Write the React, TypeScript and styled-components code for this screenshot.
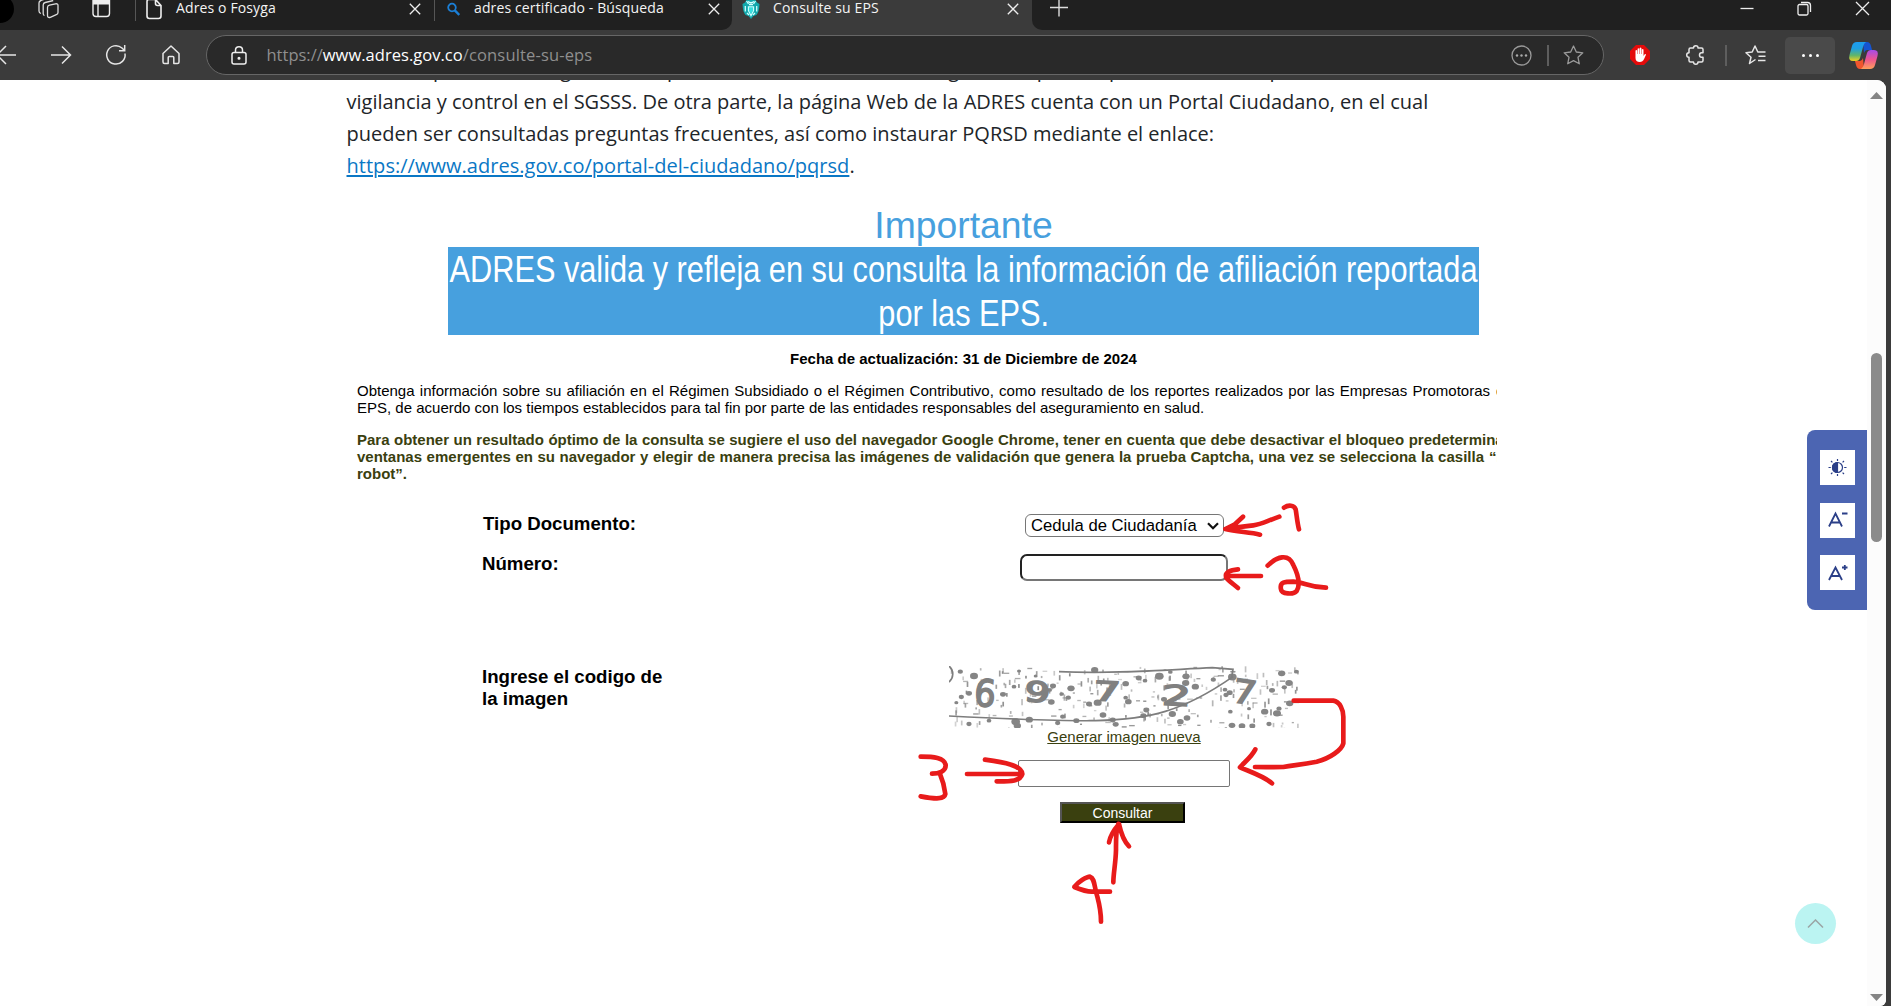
import React from "react";
import styled, { createGlobalStyle } from "styled-components";

const ARIAL = '"Liberation Sans", Arial, sans-serif';
const UI = '"Open Sans", "Noto Sans", sans-serif';
const OLIVE = "#3a400f";

const GlobalStyle = createGlobalStyle`
  * { box-sizing: border-box; }
  html, body { margin: 0; padding: 0; overflow: hidden; background: #3b3b3b; }
`;

const Window = styled.div`
  position: relative;
  width: 1891px;
  height: 1006px;
  display: flex;
  flex-direction: column;
  overflow: hidden;
  background: #3b3b3b;
  font-family: ${UI};
`;

/* ---------- tab strip ---------- */
const TabStrip = styled.header`
  display: flex;
  height: 30px;
  flex: none;
  background: #202020;
  overflow: hidden;
`;
const Leading = styled.div`
  display: flex;
  width: 135px;
  flex: none;
`;
const Avatar = styled.div`
  width: 28px;
  height: 28px;
  margin: -5px 24px 0 -14px;
  border-radius: 50%;
  background: #000;
`;
const LeadIcon = styled.svg<{ $gap?: number }>`
  display: block;
  flex: none;
  margin-right: ${(p) => p.$gap ?? 0}px;
`;
const Tab = styled.div<{ $width: number; $pad: number }>`
  display: flex;
  align-items: flex-start;
  flex: none;
  width: ${(p) => p.$width}px;
  height: 30px;
  padding-left: ${(p) => p.$pad}px;
  background: #202020;
`;
const Separator = styled.i`
  width: 1px;
  height: 21px;
  flex: none;
  background: #565656;
`;
const ActiveTab = styled(Tab)`
  background: #3b3b3b;
`;
const Corner = styled.span<{ $side: "left" | "right" }>`
  flex: none;
  width: 10px;
  height: 30px;
  background: #3b3b3b;
  margin: ${(p) => (p.$side === "left" ? "0 0 0 -10px" : "0")};
  &::before {
    content: "";
    display: block;
    height: 30px;
    background: #202020;
    border-radius: ${(p) => (p.$side === "left" ? "0 0 10px 0" : "0 0 0 10px")};
  }
`;
const TabTitle = styled.span`
  flex: 1;
  height: 16px;
  color: #f4f4f4;
  font-size: 14px;
  line-height: 16px;
  letter-spacing: 0.13px;
  white-space: nowrap;
`;
const TabIcon = styled.svg<{ $gap: number }>`
  display: block;
  flex: none;
  margin-right: ${(p) => p.$gap}px;
`;
const CloseIcon = styled.svg<{ $right: number }>`
  display: block;
  flex: none;
  margin: 3px ${(p) => p.$right}px 0 0;
`;
const WindowControls = styled.div`
  display: flex;
  margin-left: auto;
  padding-right: 21px;
  gap: 43px;
`;

/* ---------- toolbar ---------- */
const Toolbar = styled.nav`
  display: flex;
  align-items: center;
  height: 50px;
  flex: none;
  background: #3b3b3b;
`;
const NavButtons = styled.div`
  display: flex;
  align-items: center;
  width: 206px;
  flex: none;
  margin-top: -1px;
`;
const Glyph = styled.svg<{ $ml?: number }>`
  display: block;
  flex: none;
  margin-left: ${(p) => p.$ml ?? 0}px;
  overflow: visible;
`;
const AddressBar = styled.div`
  display: flex;
  align-items: center;
  width: 1398px;
  height: 40px;
  flex: none;
  border: 1.5px solid #666;
  border-radius: 20px;
  background: #292929;
`;
const Url = styled.div`
  flex: 1;
  display: flex;
  margin-left: 20px;
  color: #8f8f8f;
  font-size: 16.5px;
  line-height: 24px;
  white-space: nowrap;
`;
const UrlPart = styled.span<{ $ls: number; $strong?: boolean }>`
  letter-spacing: ${(p) => p.$ls}px;
  color: ${(p) => (p.$strong ? "#fff" : "inherit")};
`;
const Divider = styled.i<{ $ml: number }>`
  width: 2px;
  height: 21px;
  flex: none;
  margin-left: ${(p) => p.$ml}px;
  background: #5e5e5e;
`;
const MenuButton = styled.div`
  display: flex;
  align-items: center;
  justify-content: center;
  gap: 4px;
  width: 50px;
  height: 37px;
  margin: 0 14px 0 19px;
  border-radius: 5px;
  background: #4a4a4a;
`;
const MenuDot = styled.i`
  width: 3px;
  height: 3px;
  border-radius: 50%;
  background: #fff;
`;

/* ---------- page ---------- */
const Viewport = styled.div`
  display: flex;
  width: 1886px;
  height: 926px;
  overflow: hidden;
  border-radius: 0 9px 6px 0;
  background: #fff;
`;
const Page = styled.main`
  display: flex;
  flex-direction: column;
  width: 1867px;
  height: 926px;
  overflow: hidden;
`;
const Intro = styled.p`
  margin: -26px 0 0 346.5px;
  color: #212529;
  font-size: 20px;
  line-height: 32px;
  white-space: nowrap;
`;
const IntroLine = styled.span`
  display: block;
`;
const IntroLink = styled.a`
  color: #0a77c5;
  letter-spacing: 0.03px;
  text-decoration: underline;
  text-decoration-thickness: 2px;
  text-underline-offset: 2px;
`;
const Query = styled.section`
  width: 1151px;
  margin: 21px 0 0 346px;
  padding-left: 11px;
  overflow: hidden;
  font-family: ${ARIAL};
`;
const Heading = styled.h2`
  width: 1031px;
  margin: 0 0 0 91px;
  color: #47a0de;
  font-size: 37.33px;
  font-weight: 400;
  line-height: 44px;
  text-align: center;
`;
const Highlight = styled.div`
  display: flex;
  flex-direction: column;
  align-items: center;
  width: 1031px;
  margin-left: 91px;
  background: #47a0de;
  color: #fff;
  font-size: 37.33px;
  line-height: 44px;
  white-space: nowrap;
`;
/* Condensed face: the regular one at 82% of its width. */
const HighlightLine = styled.span`
  display: block;
  transform: scaleX(0.823);
`;
const Updated = styled.p`
  width: 1031px;
  margin: 15px 0 15px 91px;
  color: #000;
  font-size: 15px;
  font-weight: 700;
  line-height: 17px;
  text-align: center;
`;
const Notice = styled.div<{ $bold?: boolean }>`
  margin-bottom: 15px;
  color: ${(p) => (p.$bold ? OLIVE : "#000")};
  font-size: 15px;
  font-weight: ${(p) => (p.$bold ? 700 : 400)};
  line-height: 17px;
`;
const NoticeLine = styled.div`
  display: flex;
  width: 1300px;
  white-space: nowrap;
`;
const Justified = styled.span<{ $width: number }>`
  flex: none;
  width: ${(p) => p.$width}px;
  text-align: justify;
  text-align-last: justify;
  white-space: normal;
`;
const Tail = styled.span<{ $gap: number }>`
  margin-left: ${(p) => p.$gap}px;
`;

/* ---------- form ---------- */
const Form = styled.form`
  display: grid;
  grid-template-columns: 466px 350px;
  grid-template-rows: 40px 113px auto;
  margin: 16px 0 0 483px;
  font-family: ${ARIAL};
`;
const Label = styled.label<{ $shift?: number }>`
  width: 190px;
  margin-left: ${(p) => p.$shift ?? 0}px;
  color: #000;
  font-size: 18.67px;
  font-weight: 700;
  line-height: 22px;
`;
const Field = styled.div`
  display: flex;
  flex-direction: column;
  align-items: center;
`;
const SelectBox = styled.div`
  display: flex;
  align-items: center;
  justify-content: space-between;
  width: 199px;
  height: 23px;
  margin: 1px 0 0 1px;
  padding: 0 4px 0 5px;
  border: 1px solid #767676;
  border-radius: 6px;
  color: #000;
  font-size: 16.67px;
  line-height: 20px;
  white-space: nowrap;
`;
const NumberInput = styled.input`
  width: 208px;
  height: 27px;
  margin-top: 1px;
  border: 2px solid;
  border-color: #222 #767676 #767676 #222;
  border-radius: 7px;
  background: #fff;
  outline: none;
`;
const Captcha = styled.svg`
  display: block;
  width: 350px;
  height: 62px;
`;
const Regenerate = styled.a`
  color: ${OLIVE};
  font-size: 15px;
  line-height: 18px;
  text-decoration: underline;
`;
const CodeInput = styled.input`
  width: 212px;
  height: 27px;
  margin-top: 14px;
  border: 1px solid #767676;
  border-radius: 2px;
  background: #fff;
  outline: none;
`;
const Submit = styled.button`
  width: 125px;
  height: 21px;
  margin: 15px 3px 0 0;
  padding: 0;
  border: 2px solid;
  border-color: #555 #000 #000 #555;
  background: ${OLIVE};
  color: #fff;
  font-family: ${ARIAL};
  font-size: 14px;
  line-height: 16px;
`;

/* ---------- scrollbar and floating controls ---------- */
const Scrollbar = styled.div`
  display: flex;
  flex-direction: column;
  align-items: center;
  width: 19px;
  height: 926px;
  padding: 12px 0 5px;
  background: #fcfcfc;
`;
const Thumb = styled.div`
  width: 11px;
  height: 189px;
  margin-top: 254px;
  border-radius: 6px;
  background: #8b8b8b;
`;
const Arrow = styled.svg<{ $end?: boolean }>`
  display: block;
  margin-top: ${(p) => (p.$end ? "auto" : 0)};
`;
const Accessibility = styled.aside`
  position: absolute;
  left: 1807px;
  top: 430px;
  display: flex;
  flex-direction: column;
  gap: 17.5px;
  width: 60px;
  height: 180px;
  padding: 20px 12px 0 13px;
  border-radius: 8px 0 0 8px;
  background: #4c65b2;
`;
const AccessButton = styled.div`
  display: flex;
  align-items: center;
  justify-content: center;
  width: 35px;
  height: 35px;
  flex: none;
  background: #fff;
  color: #2b3f88;
`;
const BackToTop = styled.div`
  position: absolute;
  left: 1795px;
  top: 903px;
  display: flex;
  align-items: center;
  justify-content: center;
  width: 41px;
  height: 41px;
  border-radius: 50%;
  background: #bbf4f2;
`;
const Ink = styled.svg`
  position: absolute;
  left: 900px;
  top: 490px;
  width: 460px;
  height: 450px;
  pointer-events: none;
`;

const Close = ({ right }: { right: number }) => (
  <CloseIcon $right={right} width="12" height="12" viewBox="0 0 12 12">
    <path d="M.8 .8l10.4 10.4M11.2 .8L.8 11.2" stroke="#eee" strokeWidth="1.3" />
  </CloseIcon>
);

/* Larger speckles of the captcha: x, y, radius in thirds of a pixel. */
const BLOTS: [number, number, number][] = [
  [34, 17, 8], [75, 30, 12], [37, 93, 8], [60, 82, 9], [162, 85, 9], [210, 15, 6], [195, 62, 7], [242, 103, 8],
  [312, 60, 9], [338, 84, 7], [366, 67, 11], [437, 12, 11], [358, 95, 8], [307, 108, 10], [420, 114, 9], [446, 110, 12],
  [530, 53, 10], [530, 95, 7], [538, 107, 10], [569, 36, 9], [588, 44, 7], [631, 31, 13], [664, 18, 7], [711, 31, 11],
  [710, 51, 11], [698, 67, 7], [739, 62, 11], [793, 41, 8], [831, 87, 8], [828, 71, 7], [850, 33, 13], [842, 80, 9],
  [645, 100, 9], [998, 22, 11], [1020, 51, 11], [1022, 112, 11], [1042, 17, 7], [1006, 64, 8], [969, 73, 9],
  [990, 128, 8], [947, 137, 11], [984, 142, 12], [670, 144, 11], [714, 156, 10], [694, 167, 10], [592, 132, 9],
  [583, 149, 9], [462, 147, 10], [491, 162, 9], [241, 161, 11], [200, 167, 13], [205, 179, 11], [326, 171, 8],
  [382, 164, 9], [341, 152, 8], [500, 175, 9], [849, 178, 10], [879, 180, 10], [910, 180, 9], [960, 174, 8],
  [844, 137, 7], [120, 164, 7], [60, 174, 8], [302, 72, 7], [95, 55, 7], [260, 30, 6], [900, 128, 6], [22, 110, 6],
];

const specks = (() => {
  let seed = 69727;
  const next = () => {
    seed = (seed * 16807) % 2147483647;
    return seed / 2147483647;
  };
  return Array.from({ length: 240 }, () => ({
    x: next() * 1050,
    y: next() * 186,
    tall: next() > 0.4,
    len: 6 + next() * 13,
    o: 0.35 + next() * 0.6,
  }));
})();

/* Each digit is stretched and tilted about its own centre. */
const DIGITS = [
  { c: "6", x: 108, y: 80, size: 112, sx: 0.9, r: 4 },
  { c: "9", x: 265, y: 77, size: 84, sx: 1.45, r: 6 },
  { c: "7", x: 474, y: 75, size: 80, sx: 1.6, r: 3 },
  { c: "2", x: 683, y: 88, size: 82, sx: 1.65, r: 3 },
  { c: "7", x: 887, y: 77, size: 98, sx: 1.15, r: 9 },
];

const CaptchaImage = () => (
  <Captcha viewBox="0 0 1050 186" preserveAspectRatio="none">
    <rect width="1050" height="186" fill="#fff" />
    {specks.map((s, i) => (
      <rect
        key={i}
        x={s.x}
        y={s.y}
        width={s.tall ? 5 : s.len}
        height={s.tall ? s.len : 4}
        fill="#858585"
        opacity={s.o}
      />
    ))}
    {BLOTS.map(([x, y, r], i) => (
      <ellipse key={i} cx={x} cy={y} rx={r} ry={r * 0.8} fill="#858585" />
    ))}
    {DIGITS.map((d, i) => (
      <text
        key={i}
        y={d.size * 0.365}
        textAnchor="middle"
        fontFamily='"DejaVu Sans", sans-serif'
        fontSize={d.size}
        fill="#808080"
        stroke="#808080"
        strokeWidth="5"
        transform={`translate(${d.x} ${d.y}) rotate(${d.r}) scale(${d.sx} 1)`}
      >
        {d.c}
      </text>
    ))}
    <g fill="none" stroke="#7d7d7d" strokeWidth="5">
      <path d="M0 150C160 158 330 166 440 164C600 160 700 138 852 32" />
      <path d="M330 17C500 24 640 12 790 5L852 10L848 34" />
      <path d="M0 0C16 14 14 36 0 48" />
    </g>
  </Captcha>
);

const Chrome = () => (
  <>
    <TabStrip>
      <Leading>
        <Avatar />
        <LeadIcon $gap={33} width="21" height="19" viewBox="0 0 21 19" fill="none" stroke="#ddd" strokeWidth="1.3">
          <path d="M9.500 7.500q0-2 2-2.400l6-1.300q2.500-.4 2.500 1.700v7q0 1.600-1.700 2.100l-6 2.700q-2.800.8-2.800-1.800z" />
          <path d="M6.500 15.500q-1.300-.4-1.300-2V5q0-2 2-2.500l8-2M3 13.500q-2-.6-2-2.500V3q0-2 2-2.500L7-1" />
        </LeadIcon>
        <LeadIcon width="19" height="18" viewBox="0 0 19 18" fill="none">
          <rect x="1" y="-3" width="16.500" height="19.500" rx="3" stroke="#eee" strokeWidth="1.400" />
          <path d="M1 0h16.500v4.500H1z" fill="#eee" />
          <path d="M6 4v12" stroke="#eee" strokeWidth="1.400" />
        </LeadIcon>
      </Leading>
      <Separator />
      <Tab $width={298} $pad={10}>
        <TabIcon $gap={14} width="16" height="20" viewBox="0 0 16 20" fill="none" stroke="#eee" strokeWidth="1.600">
          <path d="M9.500-.5H3q-2 0-2 2V16q0 2.500 2.500 2.500h9Q15 18.500 15 16V5.500zM9.500-1v4.500q0 2 2 2H15" />
        </TabIcon>
        <TabTitle>Adres o Fosyga</TabTitle>
        <Close right={13} />
      </Tab>
      <Separator />
      <Tab $width={297} $pad={12}>
        <TabIcon $gap={14} width="13" height="16" viewBox="0 0 13 16" fill="none" stroke="#1b7fd6">
          <circle cx="5" cy="7.500" r="3.800" strokeWidth="1.800" />
          <path d="M7.800 10.300l4.500 4.700" strokeWidth="2.400" />
        </TabIcon>
        <TabTitle>adres certificado - Búsqueda</TabTitle>
        <Close right={12} />
      </Tab>
      <Corner $side="left" />
      <ActiveTab $width={300} $pad={10}>
        <TabIcon $gap={13} width="18" height="19" viewBox="0 0 18 19">
          <path d="M3 2.500L5-1h8l2 3.500 2.500 1.500q-.3 8-3 11L11.500 16 9 19l-2.500-3L3.500 15Q.8 12 .5 4z" fill="#12a8ac" />
          <path d="M4.500 1l2 3M13.500 1l-2 3M3.300 6v5.500M14.700 6v5.500M6.500 7h5v3.500l-2.500 5-2.500-5zM5 13l2 2M13 13l-2 2" stroke="#c8ffff" strokeWidth="1.300" fill="none" />
          <path d="M7 7.500h4v3L9 14l-2-3.500z" fill="#38e0e0" />
          <path d="M6 1.500q3 2.500 6 0M7 4.500h4" stroke="#d9ffff" strokeWidth="1.500" fill="none" />
        </TabIcon>
        <TabTitle>Consulte su EPS</TabTitle>
        <Close right={13} />
      </ActiveTab>
      <Corner $side="right" />
      <LeadIcon width="30" height="18" viewBox="0 0 30 18">
        <path d="M8 7.500h18M17-1v17.500" stroke="#ddd" strokeWidth="1.400" />
      </LeadIcon>
      <WindowControls>
        <LeadIcon width="14" height="18"><path d="M.500 8.500h13" stroke="#eee" strokeWidth="1.300" /></LeadIcon>
        <LeadIcon width="15" height="18" fill="none" stroke="#eee" strokeWidth="1.300">
          <rect x="1" y="4.500" width="10" height="10.500" rx="1.500" />
          <path d="M4 2.500h6.500q3 0 3 3V12" />
        </LeadIcon>
        <LeadIcon width="15" height="18"><path d="M1 2l13 13M14 2L1 15" stroke="#eee" strokeWidth="1.300" /></LeadIcon>
      </WindowControls>
    </TabStrip>

    <Toolbar>
      <NavButtons>
        <Glyph width="16" height="20" viewBox="0 0 16 20" fill="none" stroke="#e6e6e6" strokeWidth="1.500">
          <path d="M16 10H-3M6 1L-3 10l9 9" />
        </Glyph>
        <Glyph $ml={35} width="20" height="20" viewBox="0 0 20 20" fill="none" stroke="#e6e6e6" strokeWidth="1.500">
          <path d="M0 10h19M11 1.500l8.500 8.500-8.500 8.500" />
        </Glyph>
        <Glyph $ml={35} width="20" height="20" viewBox="0 0 20 20" fill="none" stroke="#e6e6e6" strokeWidth="1.500">
          <path d="M19 8.500A9.200 9.200 0 1 1 16 3l2.500 2.500M18.700 0v5.700H13" />
        </Glyph>
        <Glyph $ml={36} width="18" height="20" viewBox="0 0 18 20" fill="none" stroke="#e6e6e6" strokeWidth="1.500" strokeLinejoin="round">
          <path d="M1 8.500L9 1l8 7.500V17q0 1.500-1.500 1.500h-3.700v-6q0-1-1-1H7.200q-1 0-1 1v6H2.500Q1 18.500 1 17z" />
        </Glyph>
      </NavButtons>
      <AddressBar>
        <Glyph $ml={23.5} width="16" height="19" viewBox="0 0 16 19" fill="none" stroke="#eee" strokeWidth="1.500">
          <rect x="1" y="6.500" width="14" height="11.500" rx="2" />
          <path d="M4.500 6.500V4q0-3.300 3.500-3.300T11.500 4v2.500" />
          <circle cx="8" cy="12.200" r=".8" fill="#eee" />
        </Glyph>
        <Url>
          <UrlPart $ls={0}>https://</UrlPart>
          <UrlPart $ls={0.03} $strong>www.adres.gov.co</UrlPart>
          <UrlPart $ls={0.16}>/consulte-su-eps</UrlPart>
        </Url>
        <Glyph width="21" height="21" viewBox="0 0 21 21" fill="none" stroke="#9a9a9a" strokeWidth="1.300">
          <circle cx="10.500" cy="10.500" r="9.500" />
          <g fill="#aaa" stroke="none">
            <circle cx="6" cy="10.500" r="1.200" />
            <circle cx="10.500" cy="10.500" r="1.200" />
            <circle cx="15" cy="10.500" r="1.200" />
          </g>
        </Glyph>
        <Divider $ml={15} />
        <Glyph $ml={14} width="21" height="20" viewBox="0 0 21 20" fill="none" stroke="#9a9a9a" strokeWidth="1.300" strokeLinejoin="round">
          <path d="M10.500 1l2.800 6 6.500.8-4.800 4.500 1.300 6.500-5.800-3.200-5.800 3.200L6 12.300 1.200 7.800 7.700 7z" />
        </Glyph>
        <Glyph width="19" height="2" />
      </AddressBar>
      <Glyph $ml={26} width="20" height="20" viewBox="0 0 20 20">
        <path d="M6 0h8l6 6v8l-6 6H6l-6-6V6z" fill="#e40b0b" />
        <path d="M5.500 9.500V5.600q.9-1 1.700 0V9h.4V3.800q.9-1 1.700 0V9h.4V3q.9-1 1.700 0v6h.4V4.500q.9-1 1.700 0V11l1.200-1.800q1.200-.5 1.300.5l-1.800 4q-1.500 3.300-4.400 3.300-4.300 0-4.300-4z" fill="#fff" />
      </Glyph>
      <Glyph $ml={36} width="19" height="20" viewBox="0 0 19 20" fill="none" stroke="#e6e6e6" strokeWidth="1.500" strokeLinejoin="round">
        <path d="M3 4.500Q3 3 4.500 3h3q0-2.300 2.300-2.300T12 3h3.500q1.500 0 1.500 1.500v3.200h-1.500q-2 0-2 2.300t2 2.300H17v3.200q0 1.500-1.500 1.500H12q0 2.300-2.200 2.300T7.500 17h-3Q3 17 3 15.500v-3.200Q.7 12.300.7 10T3 7.700z" />
      </Glyph>
      <Divider $ml={20} />
      <Glyph $ml={18} width="21" height="20" viewBox="0 0 21 20" fill="none" stroke="#e6e6e6" strokeWidth="1.500" strokeLinejoin="round">
        <path d="M10.500 14.500l-6 4L6 12.300 1 7.800 7.200 7 10 1l2.800 6H20.500M13.500 11.300h7M13 15.500h7.500" />
      </Glyph>
      <MenuButton>
        <MenuDot />
        <MenuDot />
        <MenuDot />
      </MenuButton>
      <Glyph width="29" height="27" viewBox="0 0 29 27">
        <defs>
          <linearGradient id="cpA" x1="0" y1="0" x2="0" y2="1">
            <stop offset="0" stopColor="#1c9cf0" />
            <stop offset=".35" stopColor="#1f9fe0" />
            <stop offset=".7" stopColor="#5fb56b" />
            <stop offset="1" stopColor="#f0d020" />
          </linearGradient>
          <linearGradient id="cpB" x1="0" y1="0" x2="0" y2="1">
            <stop offset="0" stopColor="#a44be8" />
            <stop offset=".5" stopColor="#ee5590" />
            <stop offset="1" stopColor="#ffa05a" />
          </linearGradient>
        </defs>
        <path d="M14 0h4q3 0 4 4l1 4h-5q-2 0-3 3z" fill="#1554d1" />
        <path d="M15 27h-4q-3 0-4-4l-1-4h5q2 0 3-3z" fill="#f0562e" />
        <path d="M8 0h9q-2 1-3 5l-3 11q-1 3-4 3H4q-5 0-3.500-6L3 4q1-4 5-4z" fill="url(#cpA)" />
        <path d="M21 27h-9q2-1 3-5l3-11q1-3 4-3h3q5 0 3.500 6L26 23q-1 4-5 4z" fill="url(#cpB)" />
      </Glyph>
    </Toolbar>
  </>
);

export default function App() {
  return (
    <Window>
      <GlobalStyle />
      <Chrome />
      <Viewport>
        <Page>
          <Intro>
            <IntroLine>
              Nacional para su encargo como la parte de la salud en todos riesgo con la parte o para la buena inspección,
            </IntroLine>
            <IntroLine>
              vigilancia y control en el SGSSS. De otra parte, la página Web de la ADRES cuenta con un Portal Ciudadano, en el cual
            </IntroLine>
            <IntroLine>pueden ser consultadas preguntas frecuentes, así como instaurar PQRSD mediante el enlace:</IntroLine>
            <IntroLine>
              <IntroLink>https://www.adres.gov.co/portal-del-ciudadano/pqrsd</IntroLink>.
            </IntroLine>
          </Intro>

          <Query>
            <Heading>Importante</Heading>
            <Highlight>
              <HighlightLine>ADRES valida y refleja en su consulta la información de afiliación reportada</HighlightLine>
              <HighlightLine>por las EPS.</HighlightLine>
            </Highlight>
            <Updated>Fecha de actualización: 31 de Diciembre de 2024</Updated>
            <Notice>
              <NoticeLine>
                <Justified $width={1133}>
                  Obtenga información sobre su afiliación en el Régimen Subsidiado o el Régimen Contributivo, como
                  resultado de los reportes realizados por las Empresas Promotoras
                </Justified>
                <Tail $gap={6}>de Salud</Tail>
              </NoticeLine>
              <NoticeLine>
                EPS, de acuerdo con los tiempos establecidos para tal fin por parte de las entidades responsables del
                aseguramiento en salud.
              </NoticeLine>
            </Notice>
            <Notice $bold>
              <NoticeLine>
                <Justified $width={1165}>
                  Para obtener un resultado óptimo de la consulta se sugiere el uso del navegador Google Chrome, tener en
                  cuenta que debe desactivar el bloqueo predeterminado
                </Justified>
              </NoticeLine>
              <NoticeLine>
                <Justified $width={1127}>
                  ventanas emergentes en su navegador y elegir de manera precisa las imágenes de validación que genera la
                  prueba Captcha, una vez se selecciona la casilla
                </Justified>
                <Tail $gap={5}>“No soy un</Tail>
              </NoticeLine>
              <NoticeLine>robot”.</NoticeLine>
            </Notice>
          </Query>

          <Form>
            <Label>Tipo Documento:</Label>
            <Field>
              <SelectBox>
                Cedula de Ciudadanía
                <Glyph width="12" height="8" viewBox="0 0 12 8" fill="none" stroke="#111" strokeWidth="2.200">
                  <path d="M1 1.200l5 5 5-5" />
                </Glyph>
              </SelectBox>
            </Field>
            <Label $shift={-1}>Número:</Label>
            <Field>
              <NumberInput />
            </Field>
            <Label $shift={-1}>
              Ingrese el codigo de
              <br />
              la imagen
            </Label>
            <Field>
              <CaptchaImage />
              <Regenerate>Generar imagen nueva</Regenerate>
              <CodeInput />
              <Submit type="button">Consultar</Submit>
            </Field>
          </Form>
        </Page>
        <Scrollbar>
          <Arrow width="13" height="7"><path d="M6.500 0L13 7H0z" fill="#858585" /></Arrow>
          <Thumb />
          <Arrow $end width="13" height="7"><path d="M6.500 7L13 0H0z" fill="#858585" /></Arrow>
        </Scrollbar>
      </Viewport>

      <Accessibility>
        <AccessButton>
          <svg width="19" height="19" viewBox="0 0 19 19" fill="none" stroke="#2b3f88" strokeWidth="1.200">
            <circle cx="9.500" cy="9.500" r="5" />
            <path d="M9.500 4.500a5 5 0 0 0 0 10z" fill="#2b3f88" />
            <path d="M9.500 1v2M9.500 16v2M.5 9.500h2.300M16.200 9.500h2.300M3 3l1.400 1.400M14.600 14.600L16 16M16 3l-1.400 1.400M4.400 14.600L3 16" />
          </svg>
        </AccessButton>
        <AccessButton>
          <svg width="20" height="18" viewBox="0 0 20 18" fill="none" stroke="#2b3f88" strokeWidth="1.800">
            <path d="M1 15.500L7.500 2.500 14 15.500M3.300 11.500h8.400M14 2.500h5.500" />
          </svg>
        </AccessButton>
        <AccessButton>
          <svg width="20" height="18" viewBox="0 0 20 18" fill="none" stroke="#2b3f88" strokeWidth="1.800">
            <path d="M1 16L7.500 3.500 14 16M3.300 12h8.400M14 3.500h5.500M16.800 1v5" />
          </svg>
        </AccessButton>
      </Accessibility>

      <BackToTop>
        <svg width="17" height="10" viewBox="0 0 17 10" fill="none" stroke="#9aa5a5" strokeWidth="1.500">
          <path d="M1 8.500L8.500 1 16 8.500" />
        </svg>
      </BackToTop>

      <Ink viewBox="0 0 1380 1350" fill="none" stroke="#e81b1b" strokeWidth="14" strokeLinecap="round" strokeLinejoin="round">
        <path d="M1138 80C1100 93 1085 103 1060 106C1030 110 1000 112 976 117M1029 80L1003 104L976 117C1010 126 1050 126 1080 134" />
        <path d="M1152 53C1165 44 1182 45 1187 58C1190 75 1192 100 1197 118" />
        <path d="M1083 258H978M1014 238C990 240 974 248 978 262C985 272 1000 282 1014 294" />
        <path d="M1103 227C1130 200 1165 188 1180 225C1200 265 1198 290 1190 303C1180 315 1145 312 1143 298C1138 275 1155 275 1180 275C1215 276 1225 292 1278 293" />
        <g transform="translate(0 480)">
          <path d="M62 320C100 320 133 322 137 345C138 365 115 371 96 371M120 372C130 395 134 415 136 432C133 448 110 448 62 439" />
          <path d="M201 372H358M255 329C310 337 365 345 367 372C360 395 330 394 290 394" />
          <path d="M1181 152H1300C1320 155 1330 180 1330 200V280C1325 300 1290 325 1250 335C1200 345 1180 345 1150 351C1120 352 1100 351 1065 351M1066 298C1055 320 1035 335 1020 352C1050 365 1095 380 1116 400" />
          <path d="M640 697C640 670 647 640 648 600C648 570 647 540 655 522M627 577C632 550 650 530 657 522C662 545 668 570 687 589" />
          <path d="M630 725H575C560 725 540 718 523 711C535 695 560 680 570 680C585 685 582 710 592 740C600 770 603 790 603 815" />
        </g>
      </Ink>
    </Window>
  );
}
